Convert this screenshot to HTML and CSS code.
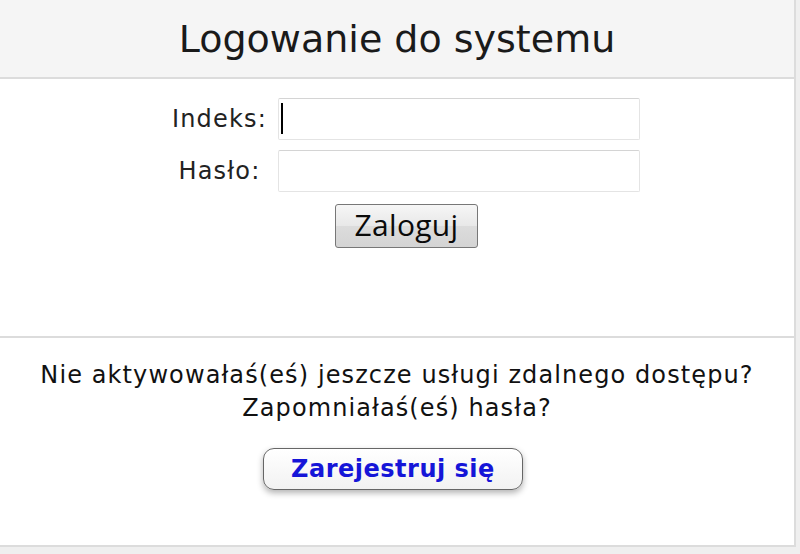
FILE: index.html
```html
<!DOCTYPE html>
<html lang="pl">
<head>
    <meta charset="UTF-8">
    <meta name="viewport" content="width=device-width, initial-scale=1.0">
    <title>Logowanie do systemu</title>
    <link rel="stylesheet" href="styles.css">
</head>
<body>
    <div class="page">
        <div class="header">
            <h1>Logowanie do systemu</h1>
        </div>

        <form class="login" onsubmit="return false;">
            <div class="fields">
                <label for="indeks">Indeks:</label>
                <div class="field focused">
                    <input type="text" id="indeks">
                </div>
                <label for="haslo">Hasło:</label>
                <div class="field">
                    <input type="password" id="haslo">
                </div>
            </div>
            <button type="submit" class="login-button">Zaloguj</button>
        </form>

        <div class="register">
            <p>Nie aktywowałaś(eś) jeszcze usługi zdalnego dostępu?<br>Zapomniałaś(eś) hasła?</p>
            <button class="register-button">Zarejestruj się</button>
        </div>
    </div>
</body>
</html>
```

FILE: styles.css
```css
body {
    margin: 0;
    background-color: #efefef;
    font-family: 'DejaVu Sans', Verdana, sans-serif;
    color: #111;
}
.page {
    width: 794px;
    background: white;
    border-right: 2px solid #dcdcdc;
}
.header {
    height: 77px;
    background-color: #f5f5f5;
    border-bottom: 2px solid #dcdcdc;
    display: flex;
    align-items: center;
    justify-content: center;
}
.header h1 {
    margin: 0;
    font-size: 38px;
    font-weight: normal;
    color: #1a1a1a;
}
.login {
    height: 259px;
    box-sizing: border-box;
    padding-top: 19px;
    border-bottom: 2px solid #dcdcdc;
    display: flex;
    flex-direction: column;
    align-items: center;
}
.fields {
    display: grid;
    grid-template-columns: 100px 362px;
    column-gap: 8px;
    row-gap: 10px;
    align-items: center;
    margin-left: 15px;
}
.fields label {
    text-align: center;
    font-size: 24px;
    letter-spacing: 1.2px;
    color: #222;
}
.field {
    position: relative;
}
.field input {
    display: block;
    width: 100%;
    height: 42px;
    box-sizing: border-box;
    border: 1px solid #e4e4e4;
    border-top-color: #d4d4d4;
    border-radius: 2px;
    padding: 4px 6px;
    font-size: 22px;
    font-family: inherit;
    outline: none;
}
.field.focused::after {
    content: "";
    position: absolute;
    left: 3px;
    top: 5px;
    width: 2px;
    height: 31px;
    background: #000;
}
.login-button {
    margin-top: 12px;
    margin-left: 19px;
    width: 143px;
    height: 44px;
    font-family: 'Open Sans', 'Liberation Sans', sans-serif;
    font-size: 30px;
    line-height: 1;
    letter-spacing: 0.3px;
    color: #0a0a0a;
    border: 1px solid #777;
    border-radius: 3px;
    background: linear-gradient(#f6f6f6, #e8e8e8 50%, #dcdcdc 51%, #d4d4d4);
    padding: 0 0 3px;
}
.register {
    height: 209px;
    box-sizing: border-box;
    border-bottom: 2px solid #dcdcdc;
    text-align: center;
    padding-top: 21px;
}
.register p {
    margin: 0;
    font-size: 24px;
    letter-spacing: 1.1px;
    line-height: 33px;
    color: #111;
}
.register-button {
    margin-top: 23px;
    margin-right: 8px;
    width: 260px;
    height: 42px;
    font-family: 'DejaVu Sans', Verdana, sans-serif;
    font-size: 24px;
    font-weight: bold;
    letter-spacing: 0.5px;
    color: #1515d8;
    background: linear-gradient(#ffffff, #f2f2f2);
    border: 1px solid #666;
    border-radius: 11px;
    box-shadow: 0 3px 6px rgba(0, 0, 0, 0.3);
    padding: 0;
}
```
